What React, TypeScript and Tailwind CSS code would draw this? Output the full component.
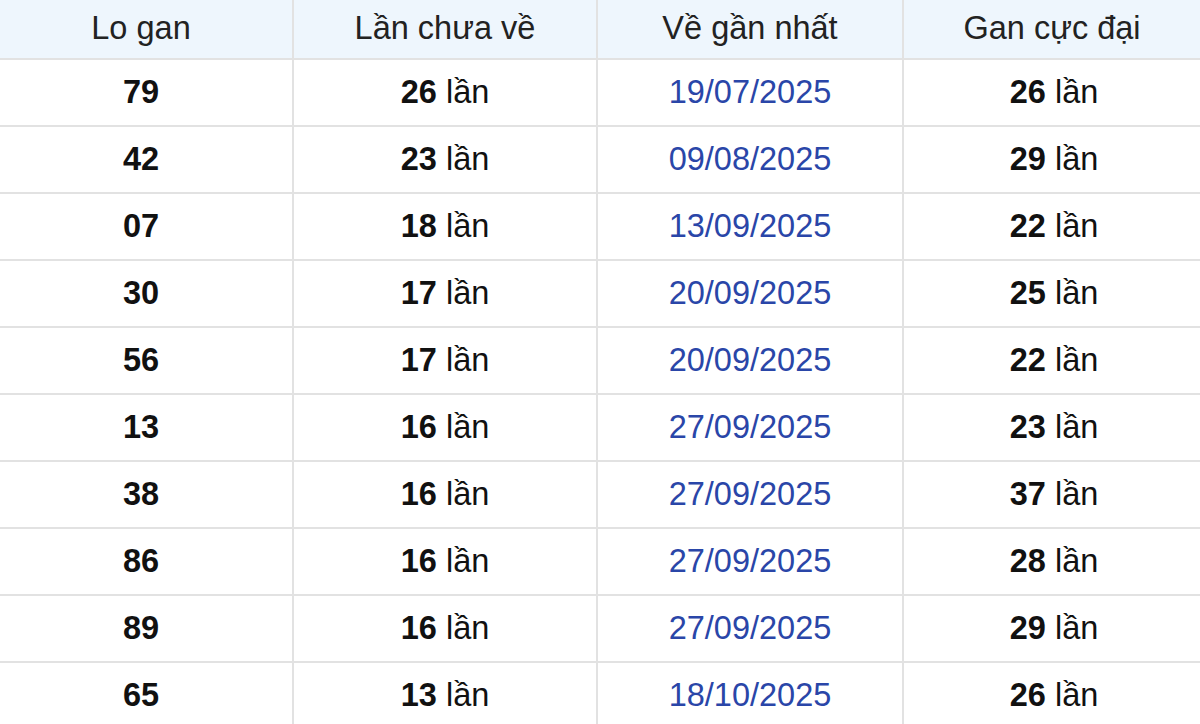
import React from "react";

interface GanRow {
  lo: string;
  chuaVe: number;
  ganNhat: string;
  cucDai: number;
}

const rows: GanRow[] = [
  { lo: "79", chuaVe: 26, ganNhat: "19/07/2025", cucDai: 26 },
  { lo: "42", chuaVe: 23, ganNhat: "09/08/2025", cucDai: 29 },
  { lo: "07", chuaVe: 18, ganNhat: "13/09/2025", cucDai: 22 },
  { lo: "30", chuaVe: 17, ganNhat: "20/09/2025", cucDai: 25 },
  { lo: "56", chuaVe: 17, ganNhat: "20/09/2025", cucDai: 22 },
  { lo: "13", chuaVe: 16, ganNhat: "27/09/2025", cucDai: 23 },
  { lo: "38", chuaVe: 16, ganNhat: "27/09/2025", cucDai: 37 },
  { lo: "86", chuaVe: 16, ganNhat: "27/09/2025", cucDai: 28 },
  { lo: "89", chuaVe: 16, ganNhat: "27/09/2025", cucDai: 29 },
  { lo: "65", chuaVe: 13, ganNhat: "18/10/2025", cucDai: 26 },
];

const headers = ["Lo gan", "Lần chưa về", "Về gần nhất", "Gan cực đại"];

const gridCols = "grid grid-cols-[294px_304px_306px_296px]";

function Times({ n }: { n: number }) {
  return (
    <span>
      <span className="font-bold">{n}</span> lần
    </span>
  );
}

export default function App() {
  return (
    <div
      className="h-[724px] w-[1200px] overflow-hidden bg-white text-[32.5px] text-[#111]"
      style={{ fontFamily: '"Liberation Sans", Arial, sans-serif' }}
    >
      <div className={`${gridCols} h-[60px] border-b-2 border-[#e2e2e2] bg-[#eef6fd] text-[#222]`}>
        {headers.map((h, i) => (
          <div
            key={h}
            className={`flex items-center justify-center pb-[2px] ${i === 0 ? "pr-[10px]" : ""} ${
              i < 3 ? "border-r-2 border-[#e2e2e2]" : ""
            }`}
          >
            {h}
          </div>
        ))}
      </div>

      {rows.map((r, idx) => (
        <div key={idx} className={`${gridCols} h-[67px] border-b-2 border-[#e2e2e2]`}>
          <div className="flex items-center justify-center border-r-2 border-[#e2e2e2] pr-[10px] font-bold">
            {r.lo}
          </div>
          <div className="flex items-center justify-center border-r-2 border-[#e2e2e2]">
            <Times n={r.chuaVe} />
          </div>
          <div className="flex items-center justify-center border-r-2 border-[#e2e2e2] text-[#2a46a8]">
            {r.ganNhat}
          </div>
          <div className="flex items-center justify-center pl-[4px]">
            <Times n={r.cucDai} />
          </div>
        </div>
      ))}
    </div>
  );
}
